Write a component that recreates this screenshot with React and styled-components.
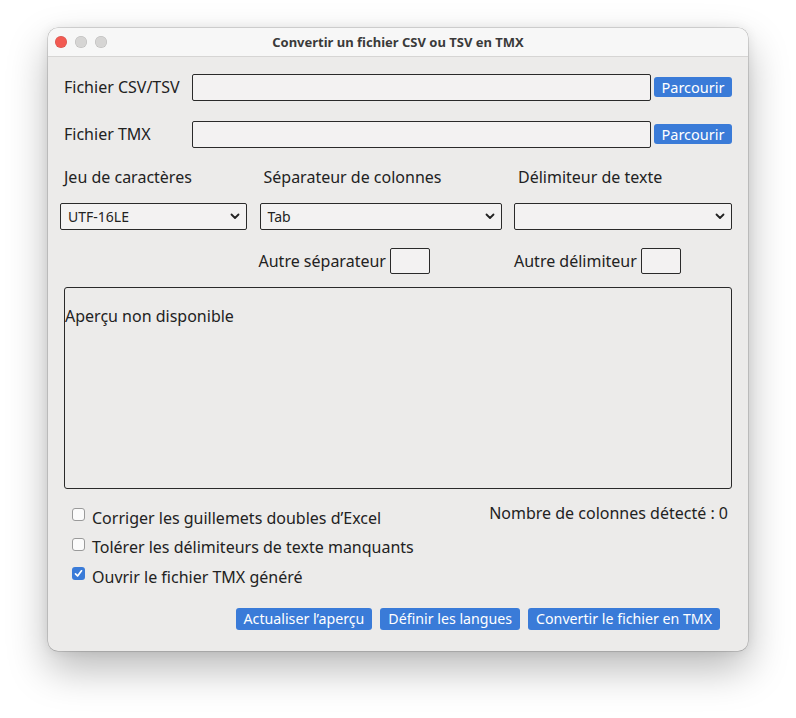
import styled, { createGlobalStyle } from "styled-components";

const GlobalStyle = createGlobalStyle`
  html, body {
    margin: 0;
    padding: 0;
    background: #ffffff;
  }
  body {
    font-family: "Noto Sans", "Open Sans", sans-serif;
    color: #222;
  }
`;

const Page = styled.div`
  width: 796px;
  height: 718px;
  padding: 28px 0 0 48px;
  box-sizing: border-box;
`;

const Window = styled.div`
  width: 700px;
  height: 623px;
  border-radius: 10px;
  overflow: hidden;
  background: #ecebea;
  box-shadow: 0 0 0 0.5px rgba(0, 0, 0, 0.25), 0 18px 40px rgba(0, 0, 0, 0.28),
    0 0 12px rgba(0, 0, 0, 0.08);
  display: flex;
  flex-direction: column;
`;

const TitleBar = styled.div`
  height: 28px;
  flex: none;
  background: #f7f7f7;
  border-bottom: 1px solid #d6d5d4;
  display: flex;
  align-items: center;
  position: relative;
`;

const Lights = styled.div`
  display: flex;
  gap: 8px;
  padding-left: 7px;
`;

const Light = styled.span`
  width: 12px;
  height: 12px;
  border-radius: 50%;
  background: ${(p) => p.$color};
  box-shadow: inset 0 0 0 0.5px rgba(0, 0, 0, 0.15);
`;

const Title = styled.div`
  position: absolute;
  left: 0;
  right: 0;
  text-align: center;
  font-size: 13px;
  font-weight: 700;
  color: #3a3a3a;
  pointer-events: none;
`;

const Body = styled.div`
  padding: 16px 16px 0 12px;
  display: flex;
  flex-direction: column;
`;

const FileRow = styled.div`
  display: flex;
  align-items: center;
  padding-left: 4px;
  height: 28px;
  margin-bottom: 19px;
`;

const RowLabel = styled.div`
  width: 128px;
  flex: none;
  font-size: 16px;
`;

const TextInput = styled.div`
  flex: 1;
  height: 27px;
  box-sizing: border-box;
  border: 1px solid #2a2a2a;
  border-radius: 2px;
  background: #f3f2f2;
`;

const BlueButton = styled.button`
  font-family: inherit;
  font-size: 14.2px;
  color: #fff;
  background: #3a7bd8;
  border: none;
  border-radius: 3px;
  height: ${(p) => p.$h || 20}px;
  padding: 0 ${(p) => p.$px || 8}px;
  line-height: 1;
  white-space: nowrap;
`;

const Browse = styled(BlueButton)`
  margin-left: 3px;
  width: 78px;
  padding: 0;
  font-size: 14.5px;
`;

const Grid3 = styled.div`
  display: grid;
  grid-template-columns: 187px 242px 218px;
  column-gap: 12.5px;
`;

const ColLabels = styled(Grid3)`
  margin-top: -2px;
  height: 24px;
  align-items: center;
  font-size: 16px;
  & > div {
    padding-left: 4px;
  }
`;

const Selects = styled(Grid3)`
  margin-top: 14px;
`;

const SelectBox = styled.div`
  height: 27px;
  box-sizing: border-box;
  border: 1px solid #2a2a2a;
  border-radius: 2px;
  background: #f3f2f2;
  display: flex;
  align-items: center;
  justify-content: space-between;
  padding: 0 6px 0 7px;
  font-size: 14px;
`;

const Others = styled(Grid3)`
  margin-top: 18px;
  height: 26px;
`;

const OtherField = styled.div`
  display: flex;
  align-items: center;
  font-size: 16px;
  margin-left: ${(p) => p.$ml || 0}px;
  gap: 4px;
`;

const SmallBox = styled.div`
  width: 40px;
  height: 26px;
  box-sizing: border-box;
  border: 1px solid #2a2a2a;
  border-radius: 2px;
  background: #f3f2f2;
`;

const Preview = styled.div`
  margin: 13px 0 0 4px;
  height: 202px;
  box-sizing: border-box;
  border: 1px solid #2a2a2a;
  border-radius: 3px;
  padding: 17px 0 0 0;
  font-size: 16px;
`;

const Bottom = styled.div`
  display: flex;
  justify-content: space-between;
  padding: 17px 4px 0 12px;
`;

const Checks = styled.div`
  display: flex;
  flex-direction: column;
  gap: 6.5px;
`;

const CheckRow = styled.label`
  display: flex;
  align-items: center;
  gap: 7px;
  font-size: 16px;
  height: 23px;
`;

const Box = styled.span`
  width: 13px;
  height: 13px;
  box-sizing: border-box;
  border-radius: 3px;
  margin-top: -6px;
  border: ${(p) => (p.$checked ? "none" : "1px solid #9a9a9a")};
  background: ${(p) => (p.$checked ? "#3a7bd8" : "#fbfbfb")};
  display: flex;
  align-items: center;
  justify-content: center;
`;

const Count = styled.div`
  font-size: 16px;
  margin-top: -4px;
`;

const Actions = styled.div`
  display: flex;
  justify-content: flex-end;
  gap: 8px;
  padding: 20px 12px 0 0;
`;

const Chevron = () => (
  <svg width="10" height="7" viewBox="0 0 10 7">
    <path
      d="M1.5 1.5 L5 5 L8.5 1.5"
      fill="none"
      stroke="#222"
      strokeWidth="1.8"
      strokeLinecap="round"
      strokeLinejoin="round"
    />
  </svg>
);

const Check = ({ checked, children }) => (
  <CheckRow>
    <Box $checked={checked}>
      {checked && (
        <svg width="9" height="9" viewBox="0 0 9 9">
          <path
            d="M1.5 4.8 L3.6 7 L7.5 1.8"
            fill="none"
            stroke="#fff"
            strokeWidth="1.7"
            strokeLinecap="round"
            strokeLinejoin="round"
          />
        </svg>
      )}
    </Box>
    {children}
  </CheckRow>
);

const Select = ({ value }) => (
  <SelectBox>
    <span>{value}</span>
    <Chevron />
  </SelectBox>
);

export default function App() {
  return (
    <>
      <GlobalStyle />
      <Page>
        <Window>
          <TitleBar>
            <Lights>
              <Light $color="#f25a52" />
              <Light $color="#d6d5d4" />
              <Light $color="#d6d5d4" />
            </Lights>
            <Title>Convertir un fichier CSV ou TSV en TMX</Title>
          </TitleBar>
          <Body>
            <FileRow>
              <RowLabel>Fichier CSV/TSV</RowLabel>
              <TextInput />
              <Browse>Parcourir</Browse>
            </FileRow>
            <FileRow>
              <RowLabel>Fichier TMX</RowLabel>
              <TextInput />
              <Browse>Parcourir</Browse>
            </FileRow>
            <ColLabels>
              <div>Jeu de caractères</div>
              <div>Séparateur de colonnes</div>
              <div>Délimiteur de texte</div>
            </ColLabels>
            <Selects>
              <Select value="UTF-16LE" />
              <Select value="Tab" />
              <Select value="" />
            </Selects>
            <Others>
              <div />
              <OtherField $ml={-1}>
                Autre séparateur
                <SmallBox />
              </OtherField>
              <OtherField>
                Autre délimiteur
                <SmallBox />
              </OtherField>
            </Others>
            <Preview>Aperçu non disponible</Preview>
            <Bottom>
              <Checks>
                <Check>Corriger les guillemets doubles d’Excel</Check>
                <Check>Tolérer les délimiteurs de texte manquants</Check>
                <Check checked>Ouvrir le fichier TMX généré</Check>
              </Checks>
              <Count>Nombre de colonnes détecté : 0</Count>
            </Bottom>
            <Actions>
              <BlueButton $h={22}>Actualiser l’aperçu</BlueButton>
              <BlueButton $h={22}>Définir les langues</BlueButton>
              <BlueButton $h={22}>Convertir le fichier en TMX</BlueButton>
            </Actions>
          </Body>
        </Window>
      </Page>
    </>
  );
}
